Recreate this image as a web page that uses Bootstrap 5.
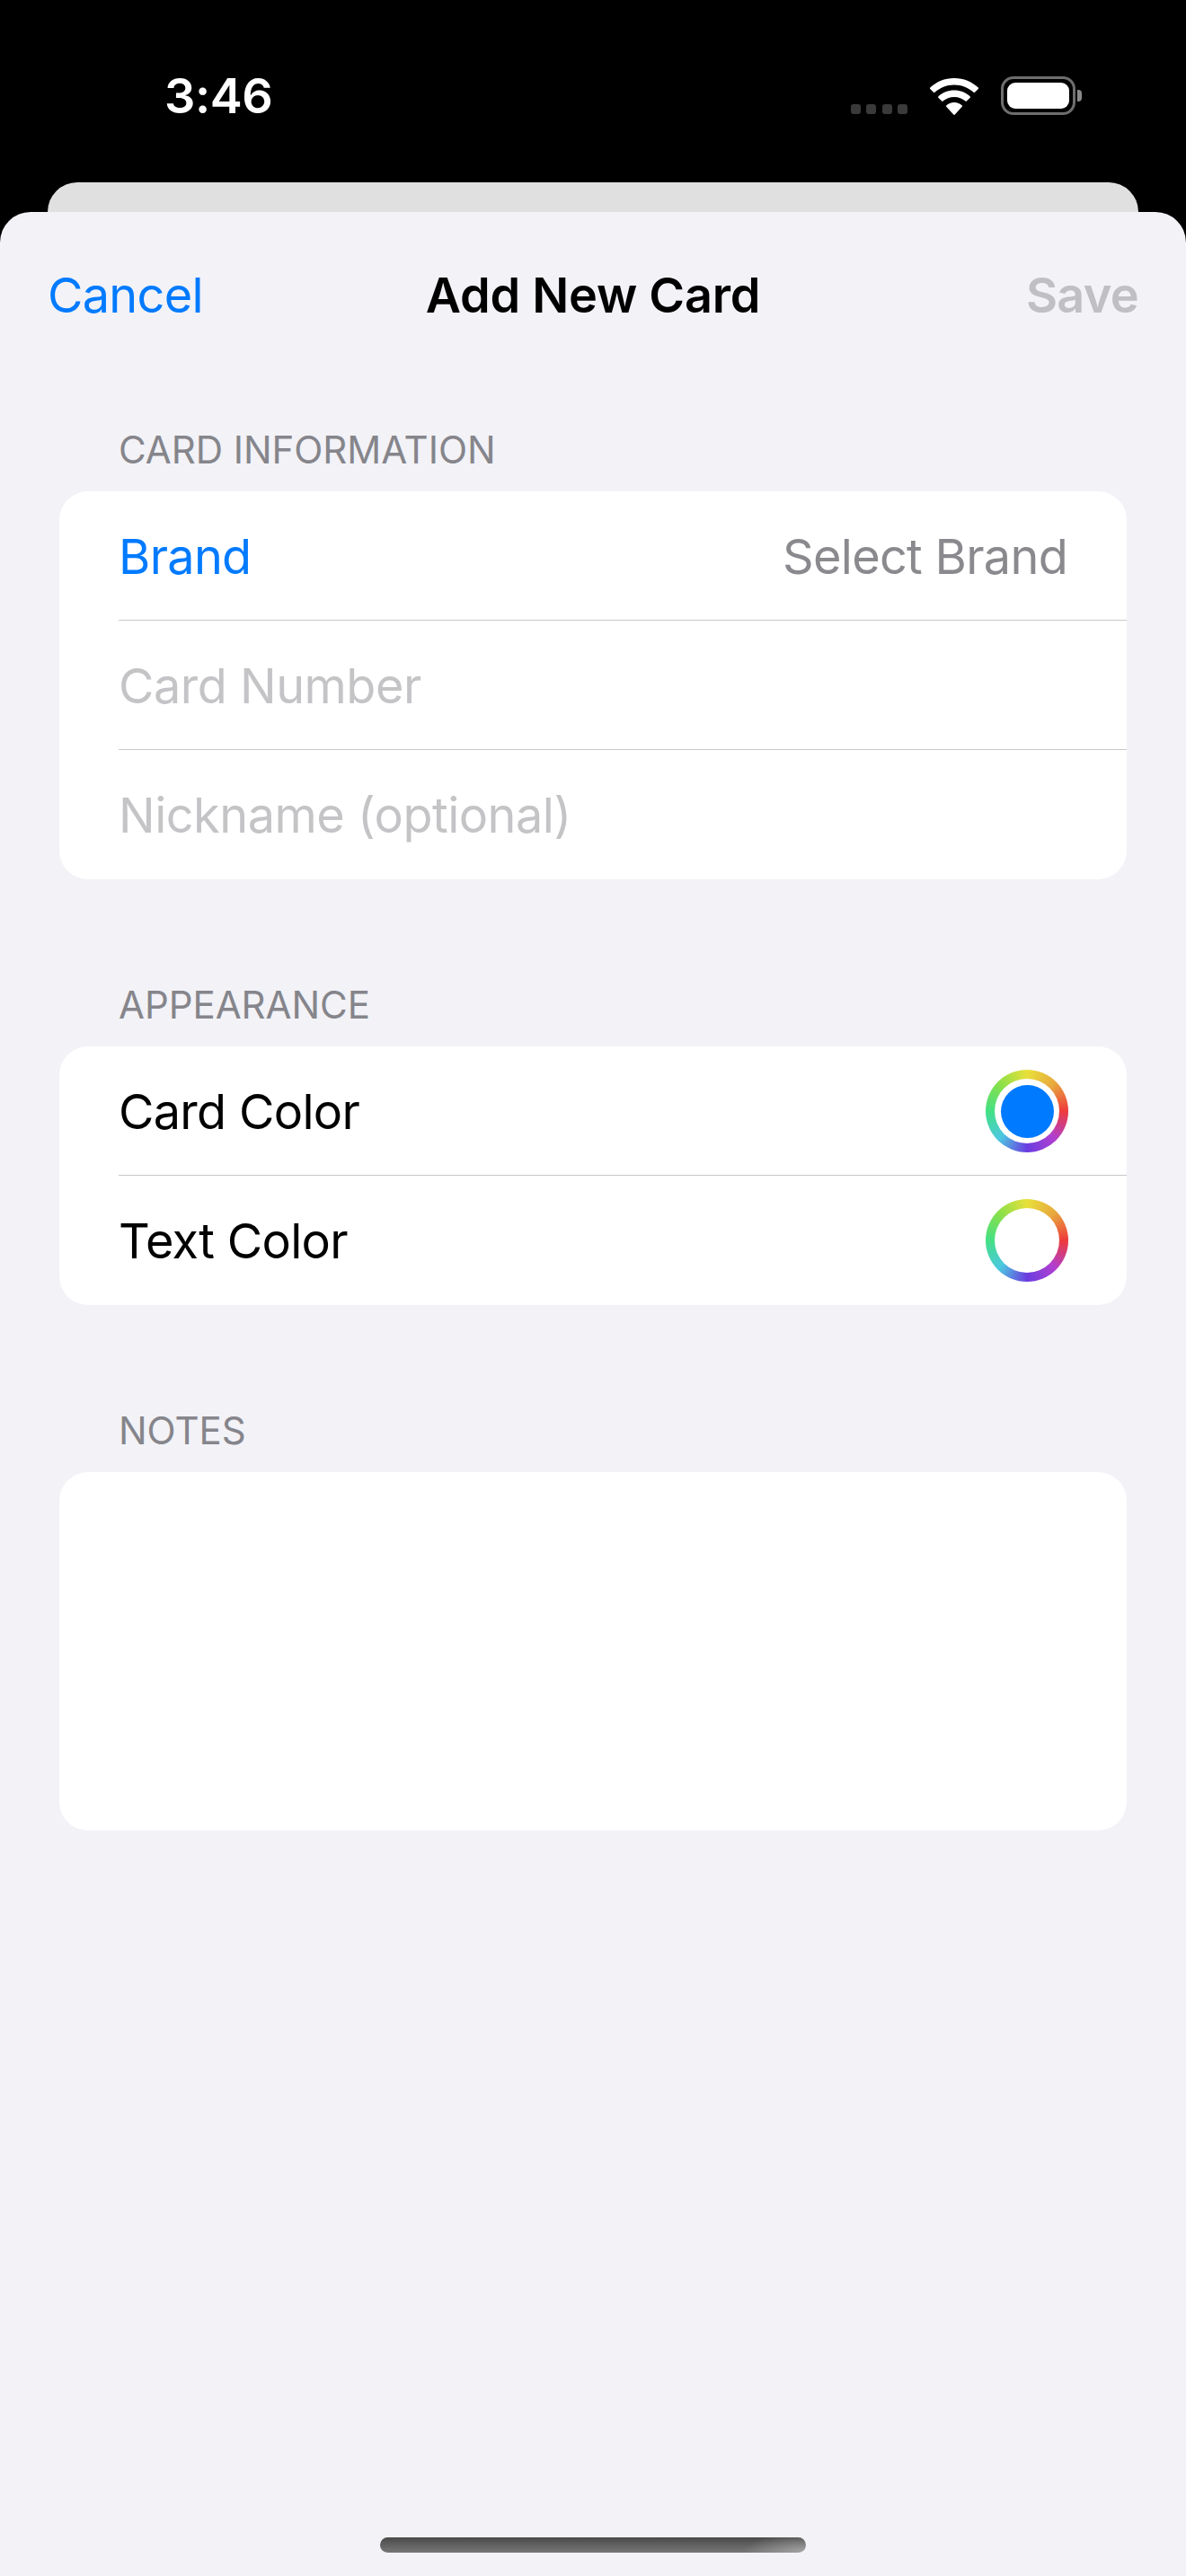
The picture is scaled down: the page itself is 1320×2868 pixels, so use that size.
<!doctype html>
<html lang="en">
<head>
<meta charset="utf-8">
<title>Add New Card</title>
<link href="https://cdn.jsdelivr.net/npm/bootstrap@5.3.0/dist/css/bootstrap.min.css" rel="stylesheet">
<style>
html,body{height:100%}
body{background:#000;font-family:Inter,"Liberation Sans",sans-serif;font-size:54px;letter-spacing:-.7px;color:#000}
.phone{width:1320px;height:2868px}
.statusbar{height:203px;color:#fff;padding:0 116px 0 183px;flex:none}
.clock{font-size:54px;font-weight:600;line-height:1;padding-top:80px;letter-spacing:-.4px}
.status-icons{height:128px;align-items:flex-end}
.cell-dots{gap:6.33px;margin-right:25px;padding-bottom:1px}
.cell-dots i{display:block;width:11px;height:11px;border-radius:3px;background:#3a3a3a}
.batt{width:83px;height:43px;border:3px solid #6e6e6e;border-radius:14px;padding:4px;margin-left:25px}
.batt b{display:block;width:100%;height:100%;background:#fff;border-radius:9px}
.batt-nub{width:5px;height:13px;background:#8a8a8a;border-radius:0 4px 4px 0;margin:0 0 15px 2px}
.peek{height:33px;margin:0 53px;background:#e0e0e0;border-radius:34px 34px 0 0;flex:none}
.sheet{background:#f2f2f7;border-radius:34px 34px 0 0;position:relative;flex:1 1 auto;min-height:0}
.navrow{height:184px;padding:0 53px 0 53px;position:relative}
.navrow .go{color:#007aff}
.navrow .off{color:#bfbfc4;font-weight:600}
.navtitle{position:absolute;left:0;right:0;text-align:center;font-weight:600;letter-spacing:-.25px}
.group-label{color:#85858b;font-size:42px;letter-spacing:-.05px;text-transform:uppercase;line-height:48px;margin:0 0 22px 132px}
.grouped{margin:0 66px;border-radius:32px;overflow:hidden;background:#fff}
.grouped .list-group-item{height:144px;border:0;padding:0 66px 0 66px;background:transparent;font-size:54px;letter-spacing:-.7px;color:#000;position:relative}
.grouped .list-group-item+.list-group-item::before{content:"";position:absolute;top:-1px;left:66px;right:0;height:1px;background:#c8c8ca}
.blue{color:#007aff!important}
.hint{color:#8a8a8e}
.grouped input{border:0;padding:0;background:transparent;font:inherit;letter-spacing:-.5px;box-shadow:none}
.grouped input::placeholder{color:#c4c4c7;opacity:1}
.well-ring{width:92px;height:92px;border-radius:50%;background:conic-gradient(#e8e03a,#e8a83e 45deg,#ee3b3b 90deg,#b03fd0 135deg,#6a3de0 180deg,#4cc8e0 225deg,#44e084 270deg,#8ae04a 315deg,#e8e03a);padding:10px;margin-right:-1px}
.well-in{width:72px;height:72px;background:#fff;border-radius:50%;padding:6.5px}
.well-dot{width:59px;height:59px;background:#007aff;border-radius:50%}
.notes{height:399px}
.home-bar{position:absolute;left:423px;top:2825px;width:474px;height:17px;border-radius:9px;background:radial-gradient(70px 22px at 100% 100%,rgba(190,190,190,.65),rgba(190,190,190,0)),linear-gradient(180deg,#4a4a4a,#777)}
.sect1{margin-top:57px}
.sect2{margin-top:116px}
</style>
</head>
<body class="m-0">
<div class="phone d-flex flex-column position-relative overflow-hidden">
  <div class="statusbar d-flex justify-content-between align-items-start">
    <div class="clock">3:46</div>
    <div class="status-icons d-flex">
      <div class="cell-dots d-flex"><i></i><i></i><i></i><i></i></div>
      <svg width="54" height="41" viewBox="0 0 54 41" aria-hidden="true"><path fill="#fff" d="M27 0C16.6 0 7.2 4 .2 10.6c-.4.4-.4.9 0 1.3l3.8 3.9c.4.4 1 .4 1.4 0C11 10.6 18.6 7.4 27 7.4s16 3.2 21.6 8.4c.4.4 1 .4 1.4 0l3.8-3.9c.4-.4.4-.9 0-1.3C46.8 4 37.4 0 27 0zM27 13.5c-6.8 0-13 2.6-17.7 6.9-.4.4-.4.9 0 1.3l3.9 3.9c.4.4 1 .4 1.3 0 3.3-2.9 7.7-4.7 12.5-4.7s9.2 1.8 12.5 4.7c.4.4.9.4 1.3 0l3.9-3.9c.4-.4.4-.9 0-1.3C40 16.1 33.8 13.5 27 13.5zM27 27c-3.4 0-6.5 1.3-8.8 3.4-.4.4-.4.9 0 1.3l8 8.9c.4.5 1.2.5 1.6 0l8-8.9c.4-.4.4-.9 0-1.3C33.500 28.300 30.400 27 27 27z"/></svg>
      <div class="d-flex align-items-end">
        <div class="batt"><b></b></div>
        <div class="batt-nub"></div>
      </div>
    </div>
  </div>
  <div class="peek"></div>
  <main class="sheet">
    <div class="navrow d-flex justify-content-between align-items-center">
      <span class="navtitle">Add New Card</span>
      <span class="go">Cancel</span>
      <span class="off">Save</span>
    </div>
    <section class="sect1">
      <div class="group-label">Card Information</div>
      <div class="list-group grouped">
        <div class="list-group-item d-flex justify-content-between align-items-center"><span class="blue">Brand</span><span class="hint">Select Brand</span></div>
        <div class="list-group-item d-flex align-items-center"><input class="w-100" type="text" placeholder="Card Number" aria-label="Card Number"></div>
        <div class="list-group-item d-flex align-items-center"><input class="w-100" type="text" placeholder="Nickname (optional)" aria-label="Nickname"></div>
      </div>
    </section>
    <section class="sect2">
      <div class="group-label">Appearance</div>
      <div class="list-group grouped">
        <div class="list-group-item d-flex justify-content-between align-items-center"><span>Card Color</span><div class="well-ring"><div class="well-in"><div class="well-dot"></div></div></div></div>
        <div class="list-group-item d-flex justify-content-between align-items-center"><span>Text Color</span><div class="well-ring"><div class="well-in"></div></div></div>
      </div>
    </section>
    <section class="sect2">
      <div class="group-label">Notes</div>
      <div class="grouped notes"></div>
    </section>
  </main>
  <div class="home-bar"></div>
</div>
<script src="https://cdn.jsdelivr.net/npm/bootstrap@5.3.0/dist/js/bootstrap.bundle.min.js"></script>
</body>
</html>
